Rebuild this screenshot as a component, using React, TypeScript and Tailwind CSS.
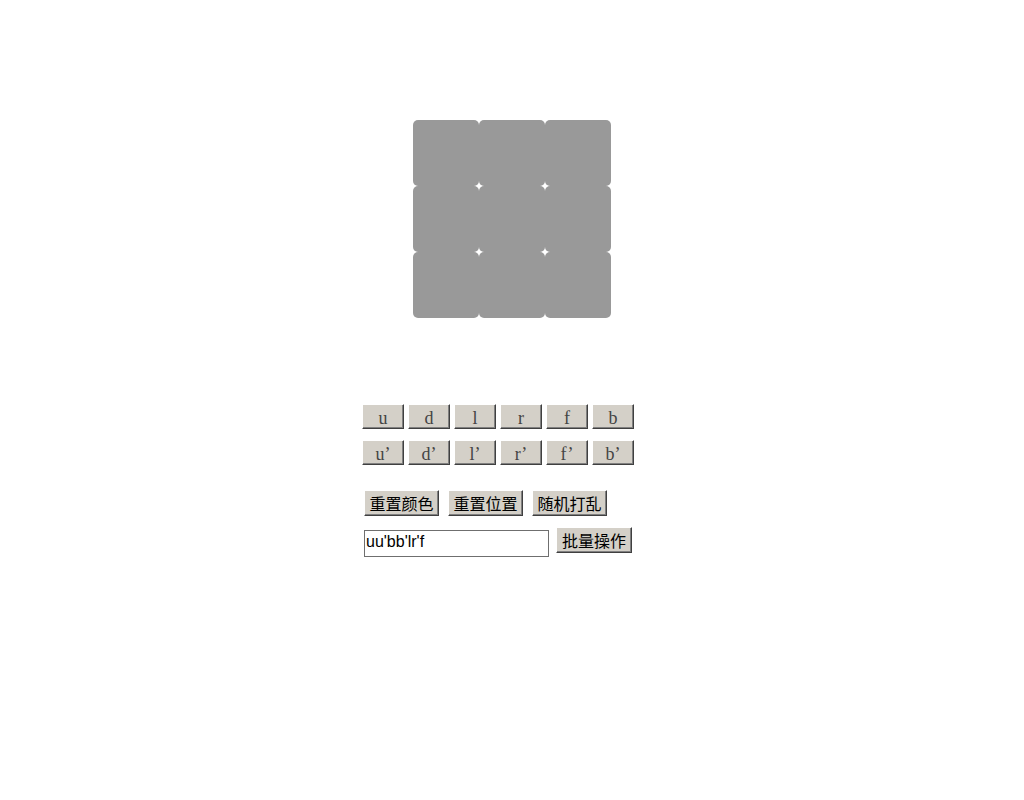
import React from "react";

const moves = ["u", "d", "l", "r", "f", "b"];

function CubeBtn({ label }: { label: string }) {
  return (
    <button
      className="w-[42px] h-[25px] bg-[#d4d0c8] border border-t-[#ffffff] border-l-[#ffffff] border-b-[#404040] border-r-[#404040] shadow-[inset_-1px_-1px_0_#808080] text-[18px] leading-none text-[#444444] flex items-center justify-center pt-[2px]"
      style={{ fontFamily: '"Liberation Serif", serif' }}
    >
      {label}
    </button>
  );
}

function CnBtn({ label, w }: { label: string; w: string }) {
  return (
    <button
      className={`${w} h-[26px] bg-[#d4d0c8] border border-t-[#ffffff] border-l-[#ffffff] border-b-[#404040] border-r-[#404040] shadow-[inset_-1px_-1px_0_#808080] text-[16px] leading-none text-black flex items-center justify-center`}
      style={{ fontFamily: '"Noto Sans CJK SC", sans-serif' }}
    >
      {label}
    </button>
  );
}

export default function App() {
  return (
    <div className="w-[1024px] h-[800px] bg-white pt-[120px]">
      <div className="mx-auto w-[198px] grid grid-cols-3">
        {Array.from({ length: 9 }).map((_, i) => (
          <div key={i} className="w-[66px] h-[66px] bg-[#999999] rounded-[5px]" />
        ))}
      </div>
      <div className="pl-[362px] pt-[86px]">
        <div className="flex gap-[4px]">
          {moves.map((m) => (
            <CubeBtn key={m} label={m} />
          ))}
        </div>
        <div className="flex gap-[4px] mt-[11px]">
          {moves.map((m) => (
            <CubeBtn key={m} label={m + "\u2019"} />
          ))}
        </div>
        <div className="ml-[2px] mt-[25px] flex gap-[9px]">
          <CnBtn label="重置颜色" w="w-[75px]" />
          <CnBtn label="重置位置" w="w-[75px]" />
          <CnBtn label="随机打乱" w="w-[75px]" />
        </div>
        <div className="ml-[2px] mt-[11px] flex items-start gap-[7px]">
          <input
            defaultValue="uu'bb'lr'f"
            className="mt-[3px] w-[185px] h-[27px] border border-[#6f6f6f] px-[1px] pb-[3px] text-[16px] text-black outline-none"
            style={{ fontFamily: '"Liberation Sans", Arial, sans-serif' }}
          />
          <CnBtn label="批量操作" w="w-[76px]" />
        </div>
      </div>
    </div>
  );
}
